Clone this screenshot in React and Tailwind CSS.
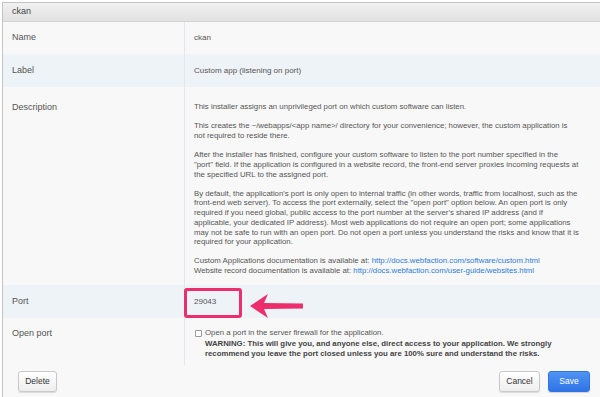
import React from "react";

export default function App() {
  const p = "mb-[9.5px]";
  return (
    <div className="w-[600px] h-[397px] bg-white pl-[2px] pt-[2px] overflow-hidden font-['Liberation_Sans',Arial,sans-serif] text-[#555]">
      <div className="relative h-[395px] border-l border-t border-[#c4c4c4] bg-[#f8f8f8] flex flex-col">
        <div className="h-[19px] shrink-0 bg-gradient-to-b from-[#f1f1f1] to-[#e1e1e1] border-b border-[#d2d2d2] flex items-center pl-[9px] text-[9px] text-[#444]">
          ckan
        </div>
        <div className="grid grid-cols-[182px_1fr]">
          <div className="h-[32px] border-r border-[#e3e6ea] pl-[9px] flex items-center text-[9px]">Name</div>
          <div className="h-[32px] pl-[9px] flex items-center text-[8px]">ckan</div>

          <div className="h-[33px] bg-[#eef3f7] border-r border-[#e3e6ea] pl-[9px] flex items-center text-[9px]">Label</div>
          <div className="h-[33px] bg-[#eef3f7] pl-[9px] flex items-center text-[8px]">Custom app (listening on port)</div>

          <div className="h-[198px] border-r border-[#e3e6ea] pl-[9px] pt-[15px] text-[9px] leading-[10px]">Description</div>
          <div className="h-[198px] pl-[9px] pt-[15px] pr-[21px] text-[7.8px] leading-[9.7px]">
            <p className={p}>This installer assigns an unprivileged port on which custom software can listen.</p>
            <p className={p}>This creates the ~/webapps/&lt;app name&gt;/ directory for your convenience; however, the custom application is not required to reside there.</p>
            <p className={p}>After the installer has finished, configure your custom software to listen to the port number specified in the "port" field. If the application is configured in a website record, the front-end server proxies incoming requests at the specified URL to the assigned port.</p>
            <p className={p}>By default, the application's port is only open to internal traffic (in other words, traffic from localhost, such as the front-end web server). To access the port externally, select the "open port" option below. An open port is only required if you need global, public access to the port number at the server's shared IP address (and if applicable, your dedicated IP address). Most web applications do not require an open port; some applications may not be safe to run with an open port. Do not open a port unless you understand the risks and know that it is required for your application.</p>
            <p>
              Custom Applications documentation is available at: <span className="text-[#2b7bd8]">http://docs.webfaction.com/software/custom.html</span>
              <br />
              Website record documentation is available at: <span className="text-[#2b7bd8]">http://docs.webfaction.com/user-guide/websites.html</span>
            </p>
          </div>

          <div className="h-[33px] bg-[#eef3f7] border-r border-[#e3e6ea] pl-[9px] flex items-center text-[9px]">Port</div>
          <div className="h-[33px] bg-[#eef3f7] pl-[9px] flex items-center text-[8px]">29043</div>

          <div className="h-[47px] border-r border-[#e3e6ea] pl-[9px] pt-[10px] text-[9px] leading-[10px]">Open port</div>
          <div className="h-[47px] pl-[10px] pt-[10px] text-[7.8px] leading-[10px]">
            <div className="flex items-center gap-[3px]">
              <span className="inline-block w-[7px] h-[7px] border border-[#999] rounded-[1px] bg-white"></span>
              <span>Open a port in the server firewall for the application.</span>
            </div>
            <div className="pl-[10px] font-bold text-[#444] mt-[1px]">
              WARNING: This will give you, and anyone else, direct access to your application. We strongly
              <br />
              recommend you leave the port closed unless you are 100% sure and understand the risks.
            </div>
          </div>
        </div>
        <div className="flex items-start justify-between pl-[15px] pr-[10px] pt-[6px]">
          <button className="h-[21px] w-[39px] rounded-[3px] border border-[#c8c8c8] bg-gradient-to-b from-white to-[#eeeeee] shadow-[0_1px_1px_rgba(0,0,0,0.12)] text-[8.5px] text-[#333]">Delete</button>
          <div className="flex gap-[8px]">
            <button className="h-[21px] w-[41px] rounded-[3px] border border-[#c8c8c8] bg-gradient-to-b from-white to-[#eeeeee] shadow-[0_1px_1px_rgba(0,0,0,0.12)] text-[8.5px] text-[#333]">Cancel</button>
            <button className="h-[21px] w-[42px] rounded-[3px] border border-[#2f74e0] bg-gradient-to-b from-[#4f93f3] to-[#2f74e6] shadow-[0_1px_1px_rgba(0,0,0,0.15)] text-[8.5px] text-white">Save</button>
          </div>
        </div>

        <div className="absolute left-[181px] top-[285px] w-[58px] h-[30px] border-[3px] border-[#ec2f6c] rounded-[3px]"></div>
        <svg className="absolute left-[244px] top-[288px]" width="56" height="30" viewBox="0 0 56 30">
          <path d="M3 15 L21 3 L17 12 L56 12.5 L56 17.5 L17 18 L21 27 Z" fill="#ec2f6c" />
        </svg>
      </div>
    </div>
  );
}
